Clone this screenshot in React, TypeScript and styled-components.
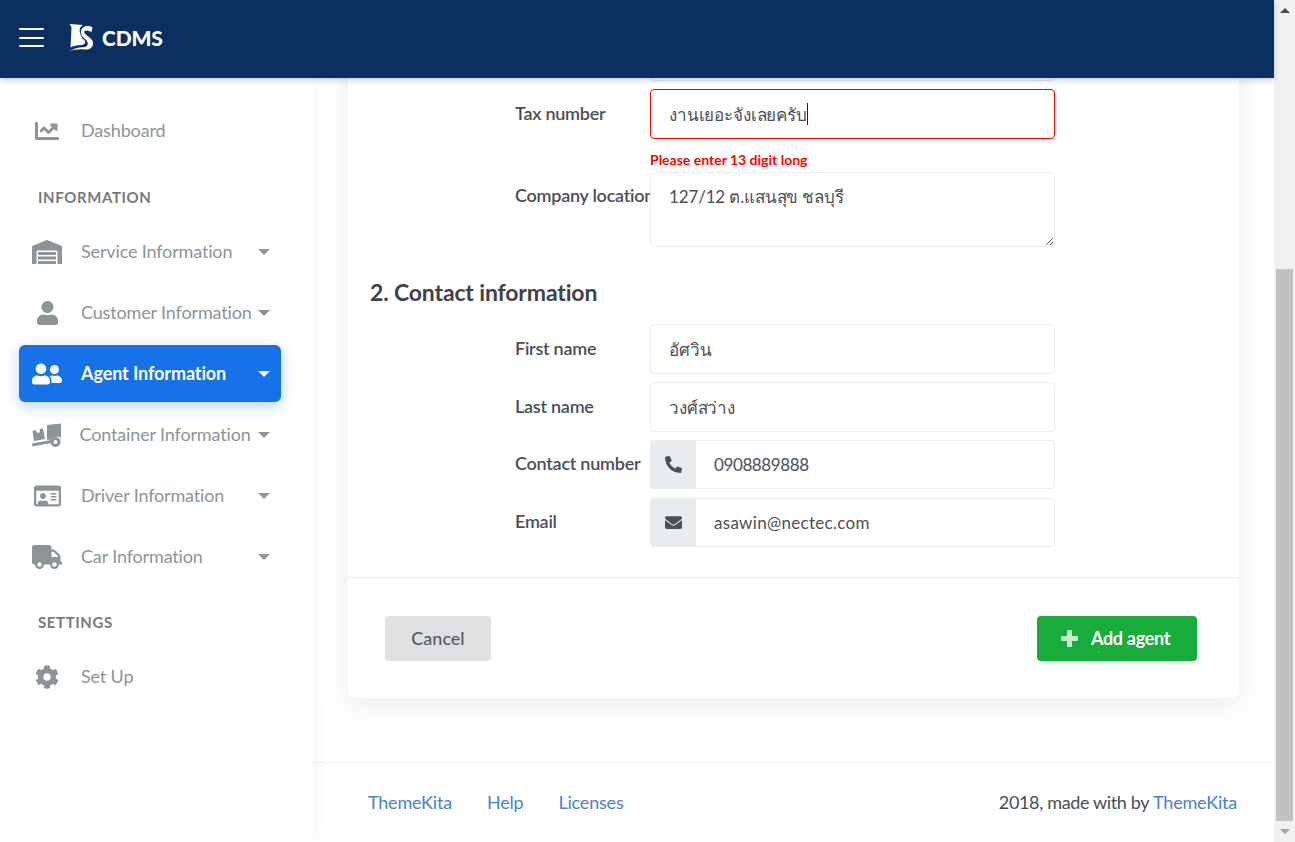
import React from 'react';
import styled, { createGlobalStyle } from 'styled-components';
import { FaChartLine, FaWarehouse, FaUser, FaUserFriends, FaRegIdCard, FaTruck, FaCog, FaPhoneAlt, FaEnvelope } from 'react-icons/fa';

const Global = createGlobalStyle`
  * { box-sizing: border-box; }
  html, body { margin: 0; height: 100%; overflow: hidden; background: #fff; }
  body { font-family: Lato, "Noto Sans", "DejaVu Sans", sans-serif; }
`;

const Shell = styled.div`display: flex; width: 1295px; height: 842px; overflow: hidden;`;
const Page = styled.div`flex: 1; min-width: 0; display: flex; flex-direction: column;`;

const Header = styled.header`
  height: 78px; flex: none; background: #0b2f60; display: flex; align-items: center; padding: 0 0 2px 19px;
  position: relative; z-index: 3; box-shadow: 0 2px 6px rgba(0,0,0,.22);
`;
const Burger = styled.div`
  width: 25px; display: flex; flex-direction: column; gap: 6.5px; margin: -1px 25px 0 0;
  span { display: block; height: 2px; background: #fff; border-radius: 1px; }
`;
const Brand = styled.div`display: flex; align-items: center; gap: 8px; color: #fff;`;
const BrandText = styled.span`font-size: 21px; font-weight: 900; letter-spacing: -0.2px; line-height: 1; margin-top: -2px;`;

const Body = styled.div`flex: 1; min-height: 0; display: flex;`;
const Sidebar = styled.aside`
  width: 313px; flex: none; background: #fff; padding: 24px 32px 0 19px; position: relative; z-index: 2;
  box-shadow: 4px 0 16px rgba(0,0,0,.035);
`;
const NavItem = styled.div<{ $active?: boolean }>`
  height: 57px; margin-bottom: 4px; padding: 0 11px 0 13px; display: flex; align-items: center; border-radius: 6px;
  color: ${p => (p.$active ? '#fff' : '#8d9498')};
  background: ${p => (p.$active ? '#1572e8' : 'transparent')};
  box-shadow: ${p => (p.$active ? '0 4px 14px rgba(21,114,232,.3)' : 'none')};
`;
const NavIcon = styled.span<{ $w: number }>`
  width: 30px; flex: none; display: flex; justify-content: center; margin-right: 19px;
  svg { display: block; flex: none; width: ${p => p.$w}px; height: 24px; }
`;
const NavLabel = styled.span<{ $active?: boolean; $tight?: boolean }>`
  flex: 1; font-size: 18px; white-space: nowrap; font-weight: ${p => (p.$active ? 700 : 400)}; padding-bottom: 2px;
  margin-left: ${p => (p.$tight ? '-1.5px' : '0')}; letter-spacing: ${p => (p.$active ? '-0.1px' : '-0.15px')};
`;
const Caret = styled.i`
  width: 0; height: 0; flex: none; border-left: 6px solid transparent; border-right: 6px solid transparent; border-top: 6px solid currentColor;
`;
const Section = styled.div<{ $top: number }>`
  padding-left: 19px; margin-top: ${p => p.$top}px; margin-bottom: 16px; height: 20px; line-height: 20px;
  font-size: 15px; font-weight: 700; letter-spacing: .6px; color: #7a7a7a;
`;

const Content = styled.main`flex: 1; min-width: 0; overflow: hidden; background: #fff; display: flex; flex-direction: column;`;
const Card = styled.section`
  margin: -47px 35px 0 35px; background: #fff; border-radius: 8px; box-shadow: 0 8px 30px rgba(0,0,0,.08); flex: none;
`;
const FormBody = styled.div`padding-bottom: 30px;`;
const Row = styled.div<{ $gap?: number }>`
  display: grid; grid-template-columns: 135px 405px; margin-left: 167px; margin-bottom: ${p => p.$gap ?? 8}px;
`;
const Label = styled.label<{ $top?: number }>`
  font-size: 18px; font-weight: 600; letter-spacing: -0.25px; color: #4a4f57; white-space: nowrap; overflow: hidden;
  padding-top: ${p => p.$top ?? 12}px; line-height: 24px;
`;
const fieldCss = `
  width: 100%; border: 1px solid #ebedf2; border-radius: 4px; background: #fff; color: #495057;
  font-family: Lato, "Noto Sans", "DejaVu Sans", sans-serif; font-size: 17px; padding: 0 18px; outline: none; letter-spacing: -.15px;
`;
const Input = styled.input`${fieldCss} height: 50px;`;
const ErrorShell = styled.div`
  ${fieldCss} height: 50px; border-color: #f00; display: flex; align-items: center;
`;
const CaretBar = styled.span`width: 1px; height: 22px; background: #222;`;
const ErrorText = styled.div`
  grid-column: 2; height: 33px; padding-top: 13px; line-height: 16px; font-size: 14px; font-weight: 700; color: #f00; 
`;
const Area = styled.textarea`${fieldCss} height: 75px; padding-top: 12px; line-height: 24px; display: block; resize: vertical;`;
const Heading = styled.h2`
  margin: 30px 0 17px 22px; font-size: 23px; line-height: 30px; font-weight: 700; letter-spacing: -.15px; color: #3f4246;
`;
const Group = styled.div`display: flex; height: 49px;`;
const Addon = styled.span`
  width: 46px; flex: none; display: flex; align-items: center; justify-content: center; background: #e9ecef;
  border-radius: 4px 0 0 4px; color: #495057; font-size: 17px;
`;
const GroupInput = styled.input<{ $track: number }>`
  ${fieldCss} flex: 1; min-width: 0; border-left: 0; border-radius: 0 4px 4px 0; letter-spacing: ${p => p.$track}px;
`;
const Actions = styled.div`
  border-top: 1px solid #ebedf2; padding: 38px 42px 37px 37px; display: flex; justify-content: space-between;
`;
const Button = styled.button<{ $tone: 'muted' | 'success'; $w: number }>`
  width: ${p => p.$w}px; height: 45px; border: 0; padding: 0 0 2px; border-radius: 4px; display: flex; align-items: center; justify-content: center; gap: 13px;
  font-family: Lato, sans-serif; font-size: 18px;
  font-weight: ${p => (p.$tone === 'success' ? 700 : 500)}; letter-spacing: ${p => (p.$tone === 'success' ? '-.3px' : '0')};
  background: ${p => (p.$tone === 'success' ? '#18ad3b' : '#dfe0e2')};
  color: ${p => (p.$tone === 'success' ? '#fff' : '#575962')};
  svg { opacity: .75; width: 17px; height: 17px; margin-left: -3px; margin-top: 2px; }
`;
const Footer = styled.footer`
  margin-top: 64px; border-top: 1px solid #eee; height: 80px; display: flex; justify-content: space-between; align-items: center;
  padding: 0 37px 2px 55px; font-size: 18px; color: #484c52;
`;
const FooterLinks = styled.nav`display: flex; gap: 35px;`;
const FooterNote = styled.span`letter-spacing: -.35px;`;
const Link = styled.a`color: #4a80d0; text-decoration: none; letter-spacing: -.2px;`;

const Scrollbar = styled.div`width: 21px; flex: none; background: #f1f1f1; display: flex; flex-direction: column; align-items: center;`;
const ArrowBox = styled.div`height: 21px; flex: none; display: flex; align-items: center; justify-content: center;`;
const ArrowUp = styled.i`width: 0; height: 0; border-left: 5px solid transparent; border-right: 5px solid transparent; border-bottom: 5px solid #505050;`;
const ArrowDown = styled.i`width: 0; height: 0; border-left: 5px solid transparent; border-right: 5px solid transparent; border-top: 5px solid #a3a3a3;`;
const Track = styled.div`flex: 1; width: 100%; display: flex; flex-direction: column; justify-content: flex-end; padding: 0 2px;`;
const Thumb = styled.div`height: 552px; background: #c1c1c1;`;

const Logo = () => (
  <svg width="25" height="28" viewBox="0 0 25 28" fill="#fff" aria-hidden="true">
    <path d="M0.5 0 L14 1 C11 3 10 5 11 9 C12 13 14 15 16 17 C17 19 15 21 12 21 C8 21 4 22 1.5 23.5 L2.5 3 Z" />
    <path d="M16 2.5 C18 1.8 21 2 23.5 3.5 L22.5 8 C20 6.5 17 6 15.5 7 C14.5 8.5 16 10 18.5 12 C22 14.5 24.5 16.5 24 20 C23.5 24 20 26 15 25.5 C10 25 5 25.5 0 27.5 C5 24.5 10 23 14 23.2 C17.5 23.4 19.5 21 18.5 18 C17.5 15.5 13 13.5 12 9.5 C11.5 6.5 13 3.5 16 2.5 Z" />
  </svg>
);

const Dolly = () => (
  <svg viewBox="0 0 30 24" fill="currentColor" aria-hidden="true">
    <path d="M15 2 L29 0.5 V15 C27 13.5 23.5 13.2 21 14.8 L19.5 16.5 L15 17 Z" />
    <path d="M0.5 8 L4 7 L5 10 L8 9.2 L7.5 6 L11 5.5 L13 16 L2 18 Z" />
    <path d="M0 20.5 L19 17 L19.5 20 L0.5 23.5 Z" />
    <path fillRule="evenodd" d="M23.5 14 a5 5 0 1 0 .01 0 Z M23.5 17 a2 2 0 1 1 -.01 0 Z" />
  </svg>
);

const PlusIcon = () => (
  <svg viewBox="0 0 17 17" fill="currentColor" aria-hidden="true">
    <path d="M7 0h3a1 1 0 0 1 1 1v5h5a1 1 0 0 1 1 1v3a1 1 0 0 1-1 1h-5v5a1 1 0 0 1-1 1H7a1 1 0 0 1-1-1v-5H1a1 1 0 0 1-1-1V7a1 1 0 0 1 1-1h5V1a1 1 0 0 1 1-1z" />
  </svg>
);

type Item = { icon: React.ReactNode; w: number; label: string; caret?: boolean; active?: boolean; tight?: boolean };
const info: Item[] = [
  { icon: <FaWarehouse />, w: 30, label: 'Service Information', caret: true },
  { icon: <FaUser />, w: 21, label: 'Customer Information', caret: true },
  { icon: <FaUserFriends />, w: 30, label: 'Agent Information', caret: true, active: true },
  { icon: <Dolly />, w: 30, label: 'Container Information', caret: true, tight: true },
  { icon: <FaRegIdCard />, w: 27, label: 'Driver Information', caret: true },
  { icon: <FaTruck />, w: 30, label: 'Car Information', caret: true },
];

const Nav = ({ icon, w, label, caret, active, tight }: Item) => (
  <NavItem $active={active}>
    <NavIcon $w={w}>{icon}</NavIcon>
    <NavLabel $active={active} $tight={tight}>{label}</NavLabel>
    {caret && <Caret />}
  </NavItem>
);

export default function App() {
  return (
    <Shell>
      <Global />
      <Page>
        <Header>
          <Burger><span /><span /><span /></Burger>
          <Brand><Logo /><BrandText>CDMS</BrandText></Brand>
        </Header>
        <Body>
          <Sidebar>
            <Nav icon={<FaChartLine />} w={24} label="Dashboard" />
            <Section $top={28}>INFORMATION</Section>
            {info.map(i => <Nav key={i.label} {...i} />)}
            <Section $top={27}>SETTINGS</Section>
            <Nav icon={<FaCog />} w={24} label="Set Up" />
          </Sidebar>
          <Content>
            <Card>
              <FormBody>
                <Row><span /><Input readOnly defaultValue="" /></Row>
                <Row $gap={0}>
                  <Label>Tax number</Label>
                  <ErrorShell>งานเยอะจังเลยครับ<CaretBar /></ErrorShell>
                  <ErrorText>Please enter 13 digit long</ErrorText>
                </Row>
                <Row $gap={0}>
                  <Label $top={11}>Company location</Label>
                  <Area readOnly defaultValue="127/12 ต.แสนสุข ชลบุรี" />
                </Row>
                <Heading>2. Contact information</Heading>
                <Row><Label>First name</Label><Input readOnly defaultValue="อัศวิน" /></Row>
                <Row><Label>Last name</Label><Input readOnly defaultValue="วงศ์สว่าง" /></Row>
                <Row $gap={9}>
                  <Label $top={11}>Contact number</Label>
                  <Group><Addon><FaPhoneAlt /></Addon><GroupInput $track={-0.4} readOnly defaultValue="0908889888" /></Group>
                </Row>
                <Row $gap={0}>
                  <Label $top={11}>Email</Label>
                  <Group><Addon><FaEnvelope /></Addon><GroupInput $track={0.3} readOnly defaultValue="asawin@nectec.com" /></Group>
                </Row>
              </FormBody>
              <Actions>
                <Button $tone="muted" $w={106}>Cancel</Button>
                <Button $tone="success" $w={160}><PlusIcon />Add agent</Button>
              </Actions>
            </Card>
            <Footer>
              <FooterLinks>
                <Link>ThemeKita</Link><Link>Help</Link><Link>Licenses</Link>
              </FooterLinks>
              <FooterNote>2018, made with by <Link>ThemeKita</Link></FooterNote>
            </Footer>
          </Content>
        </Body>
      </Page>
      <Scrollbar>
        <ArrowBox><ArrowUp /></ArrowBox>
        <Track><Thumb /></Track>
        <ArrowBox><ArrowDown /></ArrowBox>
      </Scrollbar>
    </Shell>
  );
}
